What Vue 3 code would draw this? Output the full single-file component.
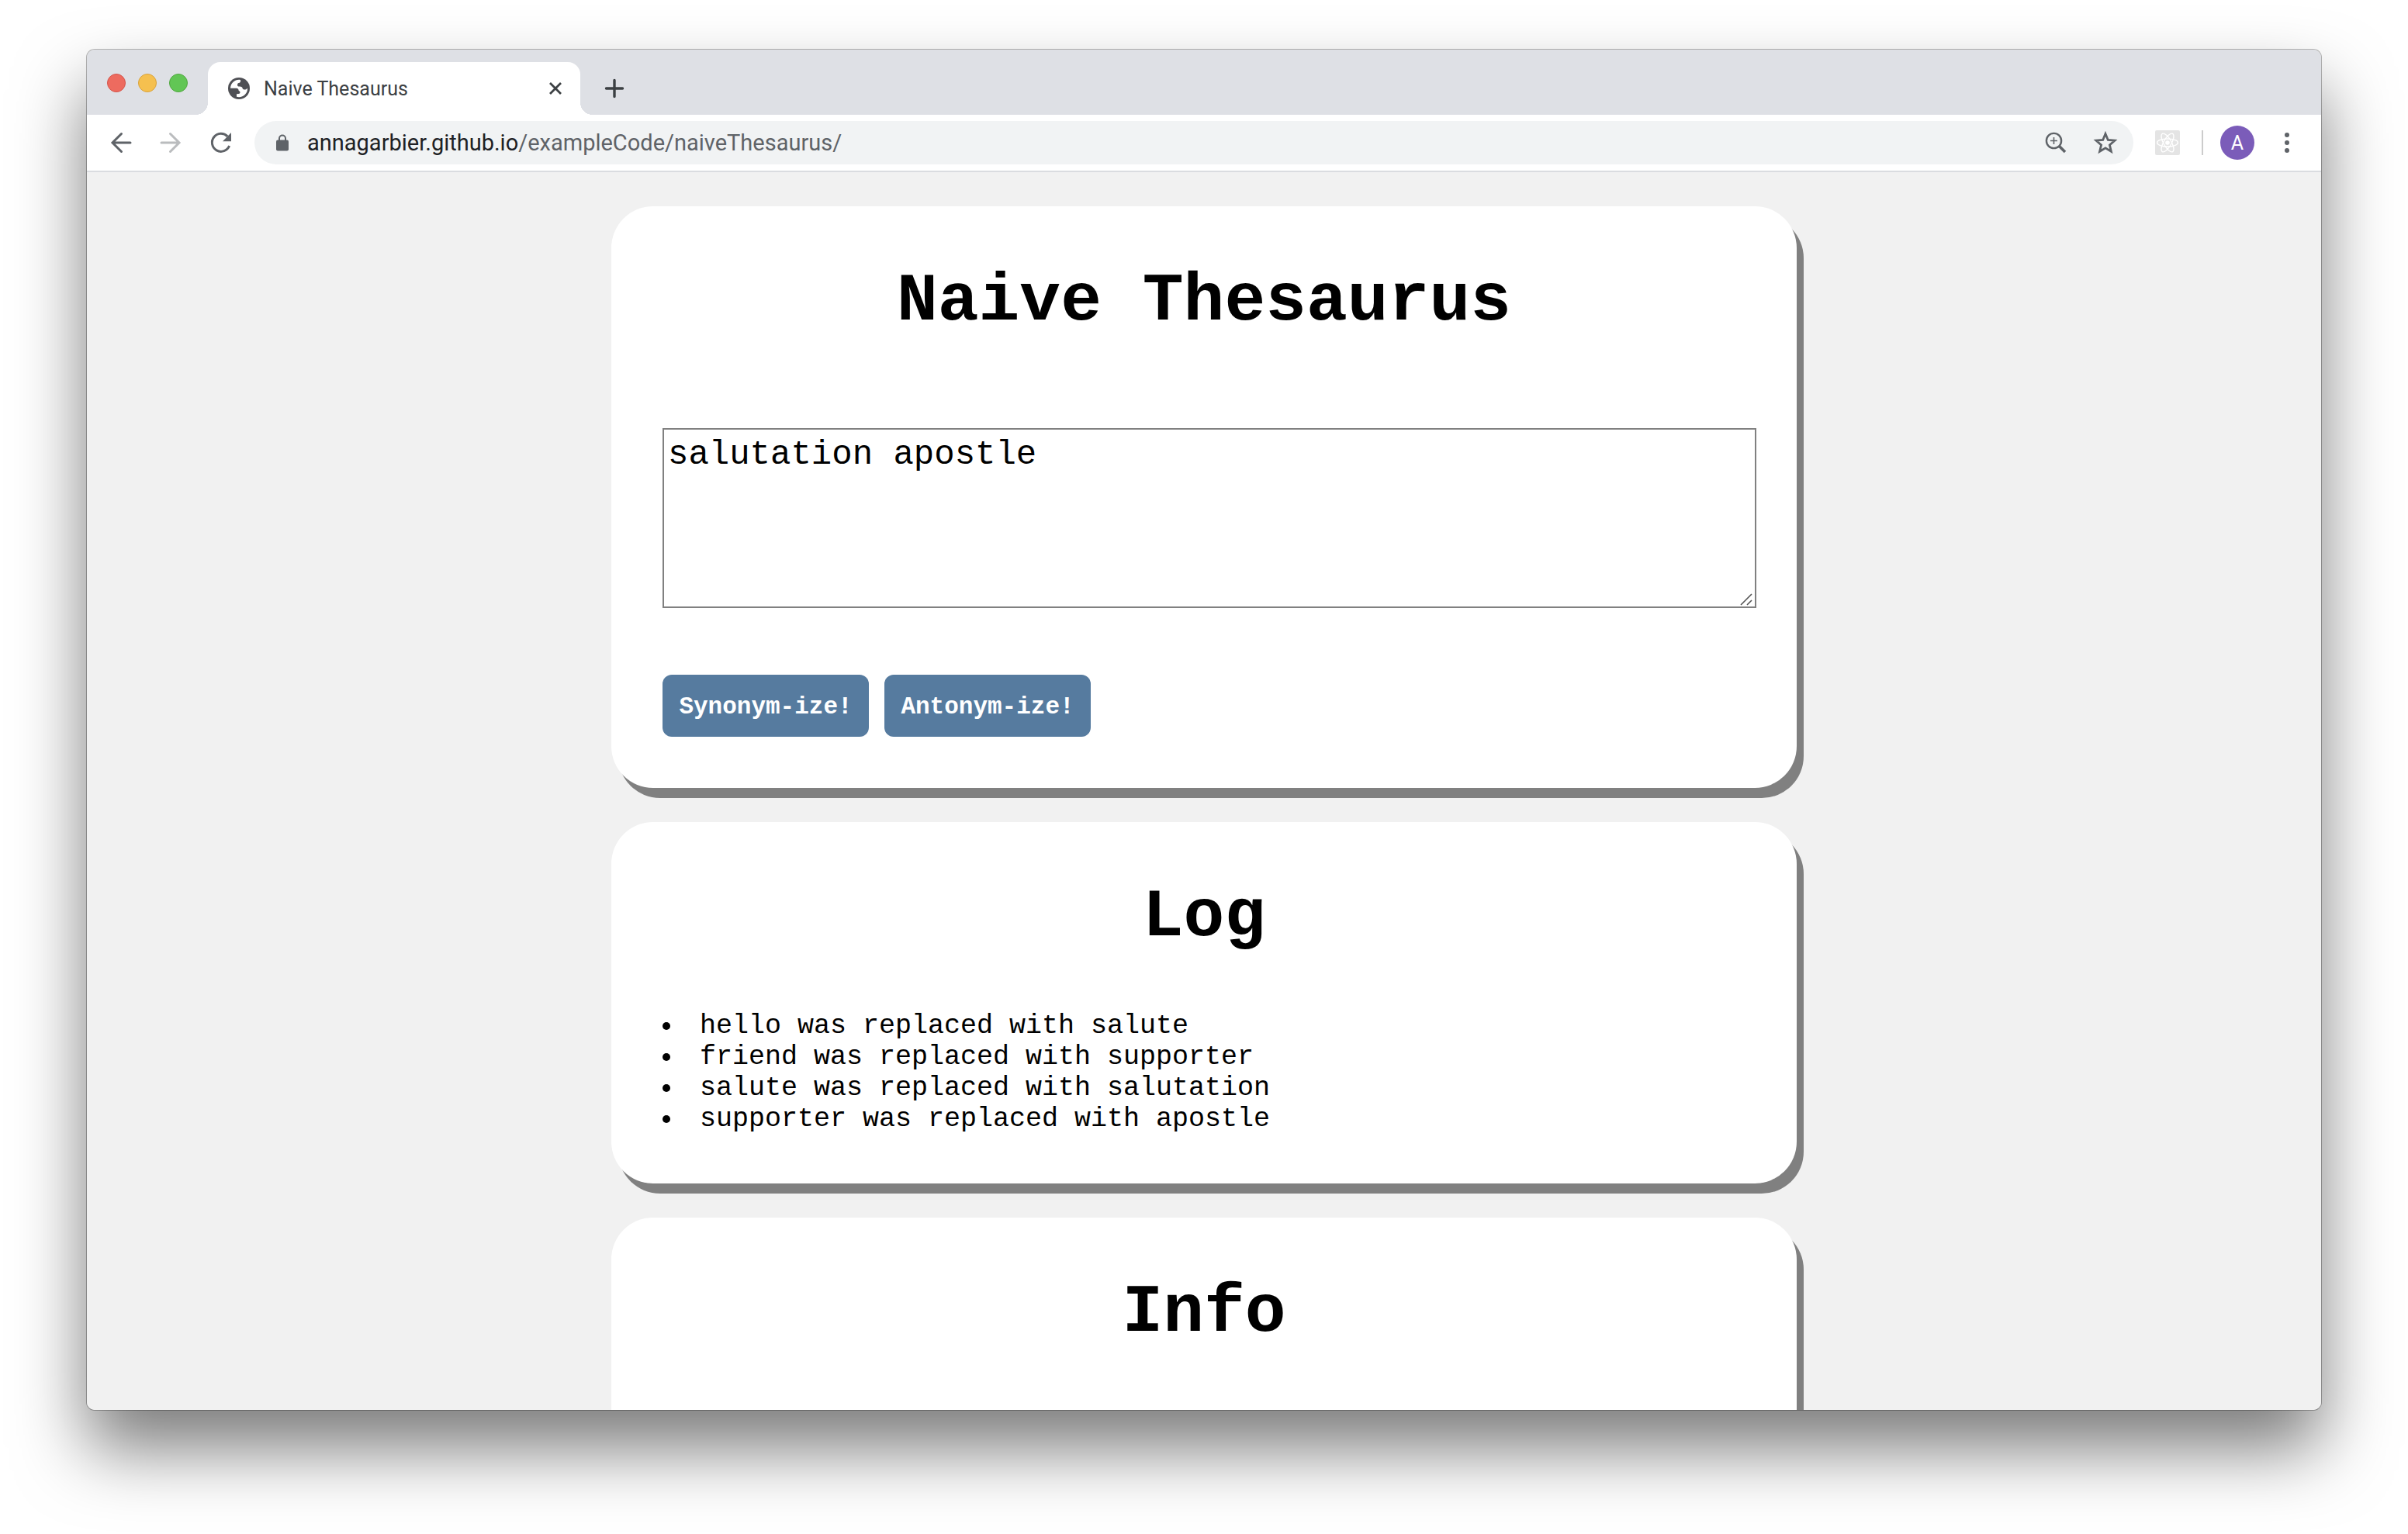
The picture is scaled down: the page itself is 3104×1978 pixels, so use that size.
<script setup>
import { ref } from 'vue'

const text = ref('salutation apostle')
const log = ref([
  'hello was replaced with salute',
  'friend was replaced with supporter',
  'salute was replaced with salutation',
  'supporter was replaced with apostle',
])
</script>

<template>
  <div class="desktop">
    <div class="window">
      <header class="tabstrip">
        <div class="lights">
          <button class="light red" aria-label="Close window"></button>
          <button class="light yellow" aria-label="Minimize window"></button>
          <button class="light green" aria-label="Zoom window"></button>
        </div>
        <div class="tab">
          <svg class="globe" viewBox="0 0 28 28" aria-hidden="true">
            <circle cx="14" cy="14" r="14" fill="#4f5055" />
            <path fill="#fff" d="M16 3C10 1.800 3.500 6 3 13.800H10C13 13.800 13.500 15.500 13.800 17C14.500 17.500 15.500 17.500 15.500 19C15.500 20.500 14.500 21.200 11 21.200V24.800C18.500 26.800 25.500 21 25 13.800C22.500 16.500 19 16 18.500 13.500C18.200 12 16.500 11.500 13.500 11.500C11.500 11.500 11.500 7.500 13.500 7C15.500 6.800 16.500 6 16 3z" />
          </svg>
          <span class="tab-title">Naive Thesaurus</span>
          <button class="icon close" aria-label="Close tab">
            <svg viewBox="0 0 16 16"><path d="M1 1L15 15M15 1L1 15" fill="none" stroke="#3c4043" stroke-width="2.800" /></svg>
          </button>
        </div>
        <button class="icon plus" aria-label="New tab">
          <svg viewBox="0 0 24 24"><path d="M12 1.500V22.500M1.500 12H22.500" fill="none" stroke="#3c4043" stroke-width="3.400" stroke-linecap="round" /></svg>
        </button>
      </header>

      <nav class="toolbar">
        <div class="nav">
          <button class="icon" aria-label="Back">
            <svg viewBox="0 0 32 32"><path d="M28 16H6M16.500 4.500L5 16L16.500 27.500" fill="none" stroke="#5f6368" stroke-width="3" stroke-linecap="round" /></svg>
          </button>
          <button class="icon" aria-label="Forward">
            <svg viewBox="0 0 32 32"><path d="M4 16H26M15.500 4.500L27 16L15.500 27.500" fill="none" stroke="#babcbe" stroke-width="3" stroke-linecap="round" /></svg>
          </button>
          <button class="icon" aria-label="Reload">
            <svg viewBox="0 0 32 32"><path d="M27.600 20A11.500 11.500 0 1 1 25.200 7.900" fill="none" stroke="#5f6368" stroke-width="3" /><path d="M30 3V14.200H19z" fill="#5f6368" /></svg>
          </button>
        </div>
        <div class="omnibox">
          <svg class="lock" viewBox="0 0 16 22" aria-hidden="true"><path d="M4 9V5.500A4 4 0 0 1 12 5.500V9" fill="none" stroke="#5f6368" stroke-width="2" /><rect y="7.500" width="16" height="14" rx="2" fill="#5f6368" /></svg>
          <a class="url" href="#"><span class="host">annagarbier.github.io</span>/exampleCode/naiveThesaurus/</a>
          <button class="icon" aria-label="Zoom">
            <svg viewBox="0 0 32 32"><circle cx="13.500" cy="13.500" r="9.600" fill="none" stroke="#5f6368" stroke-width="2.400" /><path d="M20.500 20.500L28 28" stroke="#5f6368" stroke-width="3.600" /><path d="M13.500 9V18M9 13.500H18" stroke="#5f6368" stroke-width="1.600" /></svg>
          </button>
          <button class="icon" aria-label="Bookmark this page">
            <svg viewBox="0 0 32 32"><path d="M16 4.500L19.300 12.500L28 13.200L21.400 18.900L23.400 27.300L16 22.800L8.600 27.300L10.600 18.900L4 13.200L12.700 12.500z" fill="none" stroke="#5f6368" stroke-width="2.800" /></svg>
          </button>
        </div>
        <button class="icon" aria-label="React Developer Tools">
          <svg viewBox="0 0 32 32"><rect width="32" height="32" rx="2" fill="#e4e4e4" /><g fill="none" stroke="#fff" stroke-width="1.400"><ellipse cx="16" cy="16" rx="13.400" ry="5" /><ellipse cx="16" cy="16" rx="13.400" ry="5" transform="rotate(60 16 16)" /><ellipse cx="16" cy="16" rx="13.400" ry="5" transform="rotate(120 16 16)" /></g><circle cx="16" cy="16" r="2.800" fill="#fff" /></svg>
        </button>
        <span class="divider"></span>
        <button class="avatar" aria-label="Profile">A</button>
        <button class="icon menu" aria-label="Menu">
          <svg viewBox="0 0 32 32"><g fill="#5f6368"><circle cx="16" cy="6" r="3" /><circle cx="16" cy="16" r="3" /><circle cx="16" cy="26" r="3" /></g></svg>
        </button>
      </nav>

      <main class="page">
        <section class="card">
          <h1>Naive Thesaurus</h1>
          <div class="field">
            <textarea v-model="text" aria-label="Text to replace" spellcheck="false"></textarea>
            <svg class="grip" viewBox="0 0 16 16" aria-hidden="true"><path d="M1 15L15 1M9 15L15 9" fill="none" stroke="#555" stroke-width="1.600" /></svg>
          </div>
          <div class="actions">
            <button class="action">Synonym-ize!</button>
            <button class="action">Antonym-ize!</button>
          </div>
        </section>
        <section class="card">
          <h1>Log</h1>
          <ul>
            <li v-for="entry in log" :key="entry">{{ entry }}</li>
          </ul>
        </section>
        <section class="card info">
          <h1>Info</h1>
        </section>
      </main>
    </div>
  </div>
</template>

<style>
body {
  background: #fff;
  overflow: hidden;
}
</style>

<style scoped>
.desktop {
  box-sizing: border-box;
  display: flex;
  height: 100vh;
  padding: 64px 112px 160px;
}
.window {
  flex: 1;
  min-width: 0;
  display: flex;
  flex-direction: column;
  overflow: hidden;
  border-radius: 10px;
  background: #f1f1f1;
  box-shadow: 0 0 0 1px rgba(0, 0, 0, 0.28), 0 50px 90px rgba(0, 0, 0, 0.52);
  font-family: Roboto, "Liberation Sans", sans-serif;
}
button {
  padding: 0;
  border: 0;
  background: none;
  font: inherit;
}
.icon {
  flex: none;
  width: 32px;
  height: 32px;
}
.icon svg {
  display: block;
  width: 100%;
  height: 100%;
  overflow: visible;
}

.tabstrip {
  flex: none;
  display: flex;
  box-sizing: border-box;
  height: 84px;
  padding: 16px 26px 0;
  background: #dee0e5;
}
.lights {
  display: flex;
  gap: 16px;
  padding-top: 15px;
  margin-right: 26px;
}
.light {
  box-sizing: border-box;
  width: 24px;
  height: 24px;
  border-radius: 50%;
  border: 1px solid;
}
.red {
  background: #ed6b5f;
  border-color: #d5554b;
}
.yellow {
  background: #f5c04f;
  border-color: #d9a23b;
}
.green {
  background: #62c655;
  border-color: #50a73f;
}
.tab {
  position: relative;
  display: flex;
  align-items: center;
  box-sizing: border-box;
  width: 480px;
  padding: 0 24px 0 26px;
  border-radius: 16px 16px 0 0;
  background: #fff;
}
.tab::before,
.tab::after {
  content: "";
  position: absolute;
  bottom: 0;
  width: 16px;
  height: 16px;
}
.tab::before {
  right: 100%;
  background: radial-gradient(circle at 0 0, transparent 16px, #fff 16px);
}
.tab::after {
  left: 100%;
  background: radial-gradient(circle at 100% 0, transparent 16px, #fff 16px);
}
.globe {
  width: 28px;
  height: 28px;
  margin-right: 18px;
}
.tab-title {
  flex: 1;
  font-size: 25px;
  color: #3c4043;
}
.close {
  width: 16px;
  height: 16px;
}
.plus {
  width: 24px;
  height: 24px;
  margin: 22px 0 0 32px;
}

.toolbar {
  flex: none;
  display: flex;
  align-items: center;
  box-sizing: border-box;
  height: 74px;
  padding: 0 28px;
  background: #fff;
  border-bottom: 2px solid #dadce0;
}
.nav {
  display: flex;
  gap: 32px;
  margin-right: 28px;
}
.omnibox {
  flex: 1;
  display: flex;
  align-items: center;
  gap: 32px;
  height: 56px;
  margin-right: 28px;
  padding: 0 20px 0 28px;
  border-radius: 28px;
  background: #f1f3f4;
}
.lock {
  flex: none;
  width: 16px;
  height: 22px;
  margin-right: -8px;
}
.url {
  flex: 1;
  font-size: 29px;
  color: #5f6368;
  text-decoration: none;
}
.host {
  color: #202124;
}
.divider {
  width: 2px;
  height: 32px;
  margin: 0 22px 0 28px;
  background: #ccc;
}
.avatar {
  width: 44px;
  height: 44px;
  margin-right: 26px;
  border-radius: 50%;
  background: #7b5cb9;
  color: #fff;
  font-size: 25px;
}

.page {
  flex: 1;
  min-height: 0;
  display: flex;
  flex-direction: column;
  align-items: center;
  gap: 44px;
  padding-top: 44px;
  overflow: hidden;
  background: #f1f1f1;
  color: #000;
  font-family: "Courier New", "Liberation Mono", monospace;
}
.card {
  flex: none;
  box-sizing: border-box;
  width: 100%;
  max-width: 1528px;
  padding: 73px 66px 66px;
  border-radius: 54px;
  background: #fff;
  box-shadow: 9px 13px 0 #808080;
}
h1 {
  margin: 0;
  font-size: 88px;
  line-height: 100px;
  text-align: center;
}
.field {
  position: relative;
  margin: 113px -14px 86px 0;
}
textarea {
  display: block;
  box-sizing: border-box;
  width: 100%;
  height: 232px;
  margin: 0;
  padding: 5px;
  border: 2px solid #808080;
  border-radius: 0;
  outline: none;
  background: #fff;
  color: #000;
  font-family: inherit;
  font-size: 44px;
  line-height: 54px;
  resize: none;
}
.grip {
  position: absolute;
  right: 5px;
  bottom: 3px;
  width: 16px;
  height: 16px;
}
.actions {
  display: flex;
  gap: 20px;
}
.action {
  min-width: 266px;
  height: 80px;
  padding: 3px 0 0;
  border-radius: 12px;
  background: #567b9f;
  color: #fff;
  font-size: 31px;
  font-weight: bold;
}
ul {
  margin: 70px 0 -3px;
  padding: 0;
  list-style: none;
}
li {
  display: flex;
  align-items: center;
  gap: 38px;
  font-size: 35px;
  line-height: 40px;
}
li::before {
  content: "";
  width: 10px;
  height: 10px;
  border-radius: 50%;
  background: #000;
}
.info {
  min-height: 600px;
}
</style>
